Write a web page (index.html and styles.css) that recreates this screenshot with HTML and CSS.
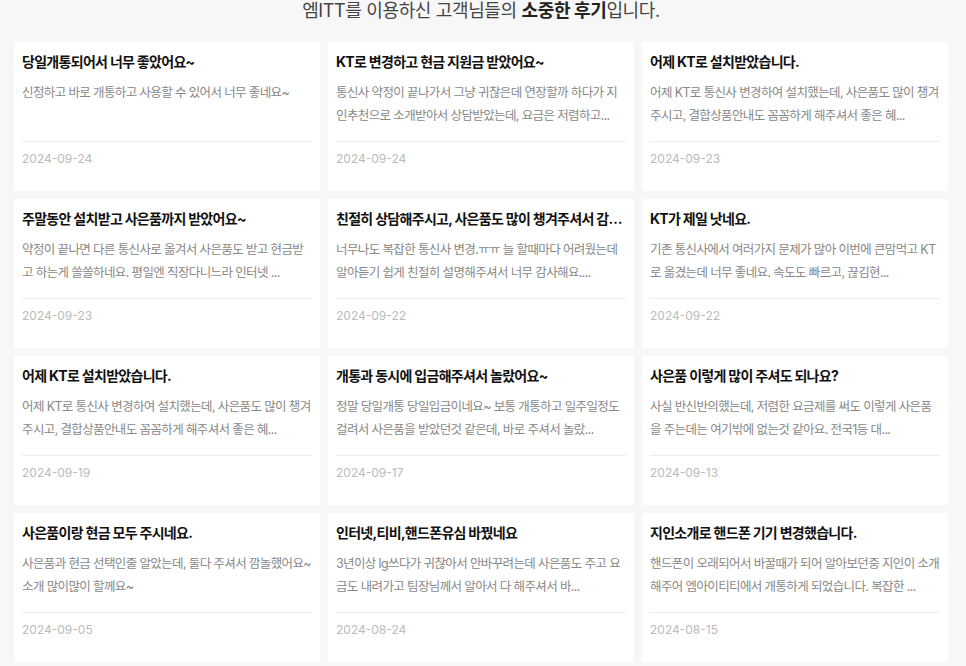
FILE: index.html
```html
<!DOCTYPE html>
<html lang="ko">
<head>
    <meta charset="UTF-8">
    <title>고객 후기</title>
    <meta name="viewport" content="width=device-width, initial-scale=1.0">
    <link rel="stylesheet" href="styles.css">
</head>
<body>
    <section class="reviews">
        <h2 class="reviews-title">엠ITT를 이용하신 고객님들의 <strong>소중한 후기</strong>입니다.</h2>

        <div class="review-grid">
            <div class="review-card">
                <h3>당일개통되어서 너무 좋았어요~</h3>
                <p>신청하고 바로 개통하고 사용할 수 있어서 너무 좋네요~</p>
                <span class="date">2024-09-24</span>
            </div>
            <div class="review-card">
                <h3>KT로 변경하고 현금 지원금 받았어요~</h3>
                <p>통신사 약정이 끝나가서 그냥 귀찮은데 연장할까 하다가 지인추천으로 소개받아서 상담받았는데, 요금은 저렴하고...</p>
                <span class="date">2024-09-24</span>
            </div>
            <div class="review-card">
                <h3>어제 KT로 설치받았습니다.</h3>
                <p>어제 KT로 통신사 변경하여 설치했는데, 사은품도 많이 챙겨주시고, 결합상품안내도 꼼꼼하게 해주셔서 좋은 혜...</p>
                <span class="date">2024-09-23</span>
            </div>

            <div class="review-card">
                <h3>주말동안 설치받고 사은품까지 받았어요~</h3>
                <p>약정이 끝나면 다른 통신사로 옮겨서 사은품도 받고 현금받고 하는게 쏠쏠하네요. 평일엔 직장다니느라 인터넷 ...</p>
                <span class="date">2024-09-23</span>
            </div>
            <div class="review-card">
                <h3>친절히 상담해주시고, 사은품도 많이 챙겨주셔서 감사합니다.</h3>
                <p>너무나도 복잡한 통신사 변경.ㅠㅠ 늘 할때마다 어려웠는데 알아듣기 쉽게 친절히 설명해주셔서 너무 감사해요....</p>
                <span class="date">2024-09-22</span>
            </div>
            <div class="review-card">
                <h3>KT가 제일 낫네요.</h3>
                <p>기존 통신사에서 여러가지 문제가 많아 이번에 큰맘먹고 KT로 옮겼는데 너무 좋네요. 속도도 빠르고, 끊김현...</p>
                <span class="date">2024-09-22</span>
            </div>

            <div class="review-card">
                <h3>어제 KT로 설치받았습니다.</h3>
                <p>어제 KT로 통신사 변경하여 설치했는데, 사은품도 많이 챙겨주시고, 결합상품안내도 꼼꼼하게 해주셔서 좋은 혜...</p>
                <span class="date">2024-09-19</span>
            </div>
            <div class="review-card">
                <h3>개통과 동시에 입금해주셔서 놀랐어요~</h3>
                <p>정말 당일개통 당일입금이네요~ 보통 개통하고 일주일정도 걸려서 사은품을 받았던것 같은데, 바로 주셔서 놀랐...</p>
                <span class="date">2024-09-17</span>
            </div>
            <div class="review-card">
                <h3>사은품 이렇게 많이 주셔도 되나요?</h3>
                <p>사실 반신반의했는데, 저렴한 요금제를 써도 이렇게 사은품을 주는데는 여기밖에 없는것 같아요. 전국1등 대...</p>
                <span class="date">2024-09-13</span>
            </div>

            <div class="review-card">
                <h3>사은품이랑 현금 모두 주시네요.</h3>
                <p>사은품과 현금 선택인줄 알았는데, 둘다 주셔서 깜놀했어요~ 소개 많이많이 할께요~</p>
                <span class="date">2024-09-05</span>
            </div>
            <div class="review-card">
                <h3>인터넷,티비,핸드폰유심 바꿨네요</h3>
                <p>3년이상 lg쓰다가 귀찮아서 안바꾸려는데 사은품도 주고 요금도 내려가고 팀장님께서 알아서 다 해주셔서 바...</p>
                <span class="date">2024-08-24</span>
            </div>
            <div class="review-card">
                <h3>지인소개로 핸드폰 기기 변경했습니다.</h3>
                <p>핸드폰이 오래되어서 바꿀때가 되어 알아보던중 지인이 소개해주어 엠아이티티에서 개통하게 되었습니다. 복잡한 ...</p>
                <span class="date">2024-08-15</span>
            </div>
        </div>
    </section>
</body>
</html>
```

FILE: styles.css
```css
body {
    font-family: Inter, "Noto Sans CJK KR", sans-serif;
    background-color: #f7f7f7;
    color: #333;
    margin: 0;
}

.reviews {
    width: 934px;
    margin: 0 0 0 14px;
}

.reviews-title {
    margin: 0;
    height: 42px;
    line-height: 22px;
    font-size: 18px;
    font-weight: 400;
    color: #444;
    text-align: center;
    letter-spacing: -0.02em;
}

.reviews-title strong {
    font-weight: 700;
    color: #222;
}

.review-grid {
    display: grid;
    grid-template-columns: repeat(3, minmax(0, 1fr));
    gap: 8px;
}

.review-card {
    background-color: #fff;
    padding: 10px 8px 23px;
    display: flex;
    flex-direction: column;
    min-width: 0;
}

.review-card h3 {
    margin: 0;
    font-size: 14px;
    line-height: 20px;
    font-weight: 700;
    color: #111;
    letter-spacing: -0.05em;
    white-space: nowrap;
    overflow: hidden;
    text-overflow: ellipsis;
}

.review-card p {
    margin: 9px 0 14px;
    height: 46px;
    font-size: 12.5px;
    line-height: 23px;
    color: #888;
    letter-spacing: -0.05em;
    word-break: break-all;
    overflow: hidden;
}

.date {
    border-top: 1px solid #eee;
    padding-top: 8px;
    font-size: 12px;
    line-height: 18px;
    color: #bbb;
}
```
